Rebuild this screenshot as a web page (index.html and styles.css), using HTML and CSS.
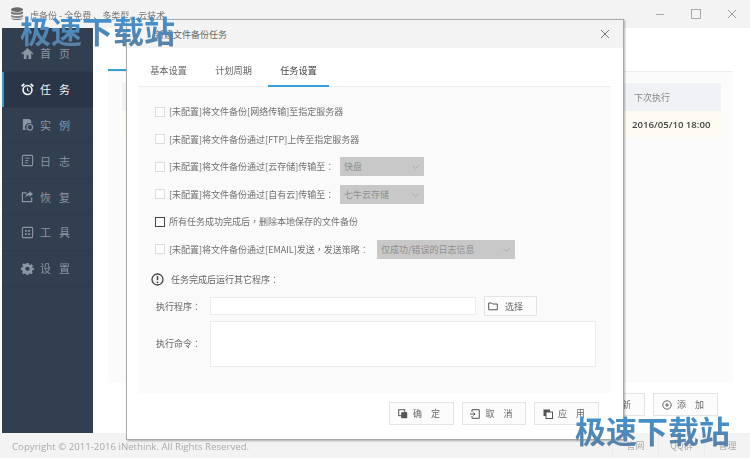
FILE: index.html
```html
<!DOCTYPE html>
<html lang="zh-CN">
<head>
<meta charset="utf-8">
<title>备份</title>
<link rel="stylesheet" href="styles.css">
</head>
<body>
<div class="app">
  <header class="titlebar">
    <svg class="logo" width="14" height="14" viewBox="0 0 14 14"><ellipse cx="7" cy="2.6" rx="6" ry="2.4" fill="#6b6b6b"/><path d="M1 4.3c1 1.6 11 1.6 12 0v2.2c-1 1.8-11 1.8-12 0z" fill="#777"/><path d="M1 7.8c1 1.6 11 1.6 12 0v2c-1 1.8-11 1.8-12 0z" fill="#888"/><path d="M1 11c1 1.2 11 1.2 12 0c0 2.8-12 2.8-12 0z" fill="#777"/></svg>
    <span class="app-title">虎备份 - 全免费 、多类型、云技术</span>
    <div class="win-ctrls">
      <svg width="10" height="10" viewBox="0 0 10 10"><path d="M1 5.5h8" stroke="#aaa" fill="none"/></svg>
      <svg width="10" height="10" viewBox="0 0 10 10"><rect x=".5" y=".5" width="9" height="9" stroke="#aaa" fill="none"/></svg>
      <svg width="10" height="10" viewBox="0 0 10 10"><path d="M1 1l8 8M9 1l-8 8" stroke="#999" fill="none"/></svg>
    </div>
  </header>

  <div class="middle">
    <nav class="sidebar">
      <a class="nav-item">
        <svg class="nav-icon" viewBox="0 0 14 14"><path d="M7 1L.5 7l1 1L3 6.8V13h3V9h2v4h3V6.8L12.500 8l1-1z" fill="currentColor"/></svg>
        <span>首页</span>
      </a>
      <a class="nav-item active">
        <svg class="nav-icon" viewBox="0 0 14 14"><circle cx="7" cy="7.500" r="4.800" fill="none" stroke="currentColor" stroke-width="1.700"/><path d="M7 5v3l2 1" fill="none" stroke="currentColor"/><path d="M.8 3.500L3.500 1M13.200 3.500L10.500 1" stroke="currentColor" stroke-width="2" fill="none"/></svg>
        <span>任务</span>
      </a>
      <a class="nav-item">
        <svg class="nav-icon" viewBox="0 0 14 14"><path d="M2 1h7l2 2v3.500a4 4 0 0 0-5 6.500H2z" fill="currentColor"/><circle cx="9.500" cy="10" r="3" fill="none" stroke="currentColor" stroke-width="1.300"/></svg>
        <span>实例</span>
      </a>
      <a class="nav-item">
        <svg class="nav-icon" viewBox="0 0 14 14"><rect x="1.500" y="1.500" width="11" height="11" rx="1" fill="none" stroke="currentColor" stroke-width="1.200"/><path d="M4.500 4.500h5M4.500 7h3.500M4.500 9.500h3" stroke="currentColor" fill="none"/></svg>
        <span>日志</span>
      </a>
      <a class="nav-item">
        <svg class="nav-icon" viewBox="0 0 14 14"><path d="M6 3H1.500v9.500h10V8" fill="none" stroke="currentColor" stroke-width="1.300"/><path d="M9 1l4 3.200L9 7.500V5.600C6.800 5.600 5.400 6.600 4.500 8.500 4.700 5.500 6.500 3.300 9 3z" fill="currentColor"/></svg>
        <span>恢复</span>
      </a>
      <a class="nav-item">
        <svg class="nav-icon" viewBox="0 0 14 14"><rect x="1.500" y="1.500" width="11" height="11" rx="1" fill="none" stroke="currentColor" stroke-width="1.200"/><path d="M4.300 4.300h2v2h-2zM7.700 4.300h2v2h-2zM4.300 7.700h2v2h-2zM7.700 7.700h2v2h-2z" fill="currentColor"/></svg>
        <span>工具</span>
      </a>
      <a class="nav-item">
        <svg class="nav-icon" viewBox="0 0 14 14"><path d="M5.800 1h2.400l.3 1.700 1.300.6 1.500-1 1.700 1.700-1 1.500.6 1.300L14 6.100v2.400l-1.700.3-.6 1.300 1 1.500-1.700 1.700-1.500-1-1.300.6-.3 1.600H5.800l-.3-1.600-1.300-.6-1.500 1-1.700-1.700 1-1.500-.6-1.300L0 8.500V6.100l1.600-.3.600-1.300-1-1.500L2.900 1.300l1.500 1 1.100-.6z M7 5a2.300 2.300 0 1 0 .01 0z" fill="currentColor" fill-rule="evenodd"/></svg>
        <span>设置</span>
      </a>
    </nav>

    <main class="main">
      <div class="main-tabs"><span class="main-tab"></span></div>
      <section class="main-panel">
        <div class="table-head"><span class="table-cell">下次执行</span></div>
        <div class="table-row"><span class="table-cell date">2016/05/10 18:00</span></div>
      </section>
      <div class="main-actions">
        <button class="btn wide">
          <svg class="btn-icon" viewBox="0 0 10 10"><path d="M8.800 5a3.800 3.800 0 1 1-1.200-2.800M8.300 .5v2.200H6" stroke="#666" fill="none"/></svg>
          <span>刷新</span>
        </button>
        <button class="btn wide">
          <svg class="btn-icon" viewBox="0 0 10 10"><circle cx="5" cy="5" r="4.200" fill="none" stroke="#666"/><path d="M5 3v4M3 5h4" stroke="#666" fill="none"/></svg>
          <span>添加</span>
        </button>
      </div>
    </main>
  </div>

  <footer class="footer">
    <span class="copyright">Copyright © 2011-2016 iNethink. All Rights Reserved.</span>
    <div class="footer-links"><a>官网</a><a>QQ群</a><a>管理</a></div>
  </footer>

  <div class="dialog">
    <div class="dialog-title">
      <span>新建文件备份任务</span>
      <svg width="10" height="10" viewBox="0 0 10 10"><path d="M1 1l8 8M9 1l-8 8" stroke="#777" fill="none"/></svg>
    </div>
    <div class="dialog-tabs">
      <span class="dlg-tab">基本设置</span>
      <span class="dlg-tab">计划周期</span>
      <span class="dlg-tab current">任务设置</span>
    </div>
    <div class="dialog-panel">
      <div class="opt"><i class="check"></i><span>[未配置]将文件备份[网络传输]至指定服务器</span></div>
      <div class="opt"><i class="check"></i><span>[未配置]将文件备份通过[FTP]上传至指定服务器</span></div>
      <div class="opt"><i class="check"></i><span class="lbl-short">[未配置]将文件备份通过[云存储]传输至<b class="punct" lang="zh-TW">：</b></span><div class="sel narrow">快盘<svg class="chev" width="7" height="4" viewBox="0 0 7 4"><path d="M.5.5l3 3 3-3" stroke="#aaa" fill="none"/></svg></div></div>
      <div class="opt"><i class="check"></i><span class="lbl-short">[未配置]将文件备份通过[自有云]传输至<b class="punct" lang="zh-TW">：</b></span><div class="sel narrow">七牛云存储<svg class="chev" width="7" height="4" viewBox="0 0 7 4"><path d="M.5.5l3 3 3-3" stroke="#aaa" fill="none"/></svg></div></div>
      <div class="opt"><i class="check on"></i><span>所有任务成功完成后<b class="punct" lang="zh-TW">，</b>删除本地保存的文件备份</span></div>
      <div class="opt"><i class="check"></i><span class="lbl-long">[未配置]将文件备份通过[EMAIL]发送<b class="punct" lang="zh-TW">，</b>发送策略<b class="punct" lang="zh-TW">：</b></span><div class="sel wide-sel">仅成功/错误的日志信息<svg class="chev" width="7" height="4" viewBox="0 0 7 4"><path d="M.5.5l3 3 3-3" stroke="#aaa" fill="none"/></svg></div></div>
      <div class="notice">
        <svg width="13" height="13" viewBox="0 0 13 13"><circle cx="6.500" cy="6.500" r="5.500" fill="none" stroke="#444" stroke-width="1.300"/><path d="M6.500 3v4.200" stroke="#444" stroke-width="1.500" fill="none"/><circle cx="6.500" cy="9.300" r=".9" fill="#444"/></svg>
        <span>任务完成后运行其它程序<b class="punct" lang="zh-TW">：</b></span>
      </div>
      <div class="field">
        <label class="field-label">执行程序<b class="punct" lang="zh-TW">：</b></label>
        <div class="input"></div>
        <button class="btn pick">
          <svg class="btn-icon" viewBox="0 0 10 10"><path d="M.7 2h3l1 1h4.600v5.800H.7z" fill="none" stroke="#555"/></svg>
          <span>选择</span>
        </button>
      </div>
      <div class="field">
        <label class="field-label">执行命令<b class="punct" lang="zh-TW">：</b></label>
        <div class="textarea"></div>
      </div>
    </div>
    <div class="dialog-foot">
      <button class="btn wide">
        <svg class="btn-icon" viewBox="0 0 10 10"><rect x=".7" y=".7" width="6" height="6" fill="none" stroke="#555"/><rect x="3.200" y="3.200" width="6" height="6" fill="#555"/></svg>
        <span>确定</span>
      </button>
      <button class="btn wide">
        <svg class="btn-icon" viewBox="0 0 10 10"><path d="M2 3V.7h7.300v8.600H2V7M0 5h5M3.500 3.500L5 5 3.500 6.500" fill="none" stroke="#555"/></svg>
        <span>取消</span>
      </button>
      <button class="btn wide">
        <svg class="btn-icon" viewBox="0 0 10 10"><rect x=".5" y=".5" width="6.500" height="6.500" fill="#555"/><rect x="3" y="3" width="6.500" height="6.500" fill="#fff" stroke="#555"/></svg>
        <span>应用</span>
      </button>
    </div>
  </div>

  <div class="watermark top">极速下载站</div>
  <div class="watermark bottom">极速下载站</div>
</div>
</body>
</html>
```

FILE: styles.css
```css
* { box-sizing: border-box; }
html, body { margin: 0; padding: 0; background: #fff; }
body { font-family: "Noto Sans CJK SC", "Open Sans", sans-serif; font-size: 9px; color: #666; }
.punct { font-family: "Noto Sans CJK TC", sans-serif; font-weight: 400; }

.app { position: relative; width: 750px; height: 458px; display: flex; flex-direction: column; overflow: hidden; filter: blur(.3px); }

.titlebar { flex: 0 0 28px; display: flex; align-items: center; background: #f3f3f3; padding: 0 13px 0 10px; }
.logo { margin-right: 6px; }
.app-title { color: #777; font-size: 9px; position: relative; top: 1px; }
.win-ctrls { margin-left: auto; display: flex; gap: 26px; }

.middle { flex: 1; display: flex; min-height: 0; padding-left: 2px; }
.sidebar { flex: 0 0 91px; background: #323f51; padding-top: 8px; }
.nav-item { display: flex; align-items: center; height: 35.8px; padding-left: 19px; color: #8b95a3; font-size: 11px; letter-spacing: 8px; border-bottom: 1px solid #2f3b4d; }
.nav-item.active { background: #2a3547; color: #f2f4f6; box-shadow: inset 2px 0 0 #2f9fd8; }
.nav-icon { width: 13px; height: 13px; margin-right: 6px; flex: none; }

.main { flex: 1; display: flex; flex-direction: column; padding: 0 17px 0 15px; }
.main-tabs { height: 43px; display: flex; align-items: flex-end; }
.main-tab { width: 60px; height: 2px; background: #35a0d8; }
.main-panel { height: 312px; background: #fbfbfb; border-top: 1px solid #eee; padding: 11px 12px 0 14px; }
.table-head { height: 28px; background: #f0f2f5; display: flex; justify-content: flex-end; align-items: center; color: #888; }
.table-row { height: 26px; background: #fdfaf1; display: flex; justify-content: flex-end; align-items: center; }
.table-cell { width: 87px; }
.date { width: 89px; font-family: "Open Sans", sans-serif; font-size: 9.600px; font-weight: 600; color: #444; white-space: nowrap; }
.main-actions { display: flex; justify-content: flex-end; gap: 8px; padding: 10px 15px 0 0; }

.btn { display: flex; align-items: center; justify-content: center; gap: 5px; height: 23px; background: #fcfcfc; border: 1px solid #e4e4e4; border-radius: 0; padding: 0; color: #666; font: inherit; }
.btn.wide { width: 65px; letter-spacing: 9px; }
.btn.wide span { margin-right: -8px; }
.btn.wide svg + span { margin-right: -4px; }
.btn-icon { width: 10px; height: 10px; flex: none; }

.footer { flex: 0 0 25px; display: flex; align-items: center; justify-content: space-between; background: #f3f3f3; padding-left: 12px; }
.copyright { font-family: "Open Sans", sans-serif; font-size: 9.670px; color: #aaa; position: relative; top: 1px; }
.footer-links { display: flex; height: 100%; }
.footer-links a { width: 46px; display: flex; align-items: center; justify-content: center; color: #aaa; font-size: 9px; border-left: 1px solid #ececec; }

.dialog { position: absolute; left: 126px; top: 19px; width: 498px; height: 421px; background: #fff; border: 1px solid #a9a9a9; box-shadow: 1px 1px 2px rgba(0,0,0,.3); display: flex; flex-direction: column; }
.dialog-title { flex: 0 0 28px; background: #f3f3f3; display: flex; align-items: center; justify-content: space-between; padding: 0 13px 0 28px; color: #666; }
.dialog-tabs { flex: 0 0 39px; display: flex; gap: 6px; border-bottom: 1px solid #eee; margin: 0 12px; }
.dlg-tab { width: 59px; display: flex; align-items: center; justify-content: center; padding-top: 6px; color: #666; font-size: 9.200px; }
.dlg-tab.current { color: #444; border-bottom: 2px solid #35a0d8; margin-bottom: -1px; width: 61px; margin-left: -1px; }
.dialog-panel { flex: 0 0 306px; margin: 0 12px; background: #fafafa; padding: 11px 0 0 16px; }
.opt { display: flex; align-items: center; height: 27.5px; color: #6f6f6f; }
.check { flex: none; width: 10px; height: 10px; border: 1px solid #ddd; background: #fff; margin-right: 4px; }
.check.on { border-color: #444; }
.opt span { white-space: nowrap; }
.lbl-short { width: 171px; }
.lbl-long { width: 208px; }
.sel { position: relative; height: 19px; background: #c8c8c8; color: #8f8f8f; display: flex; align-items: center; padding-left: 4px; }
.sel.narrow { width: 84px; }
.sel.wide-sel { width: 138px; }
.chev { position: absolute; right: 5px; top: 8px; }
.notice { display: flex; align-items: center; gap: 7px; margin: 9px 0 0 -4px; height: 14px; color: #666; }
.field { display: flex; align-items: flex-start; margin-top: 11px; }
.field + .field { margin-top: 4px; }
.field-label { width: 54px; margin-left: 1px; line-height: 20px; color: #666; }
.field + .field .field-label { line-height: 46px; }
.input { width: 266px; height: 18px; background: #fff; border: 1px solid #ececec; }
.btn.pick { width: 53px; height: 20px; margin-left: 8px; margin-top: -1px; gap: 7px; justify-content: flex-start; padding-left: 3px; }
.textarea { width: 386px; height: 46px; background: #fff; border: 1px solid #ececec; }
.dialog-foot { flex: 1; display: flex; justify-content: flex-end; gap: 8px; padding: 9px 24px 0 0; }
.dialog-foot .btn:nth-child(2) { width: 64px; }

.watermark { position: absolute; font-size: 31px; line-height: 36px; font-weight: 700; white-space: nowrap; background: linear-gradient(180deg, #3d93d6, #5b80a3); -webkit-background-clip: text; background-clip: text; color: transparent; }
.watermark.top { left: 20px; top: 12px; }
.watermark.bottom { left: 575px; top: 412px; }
```
